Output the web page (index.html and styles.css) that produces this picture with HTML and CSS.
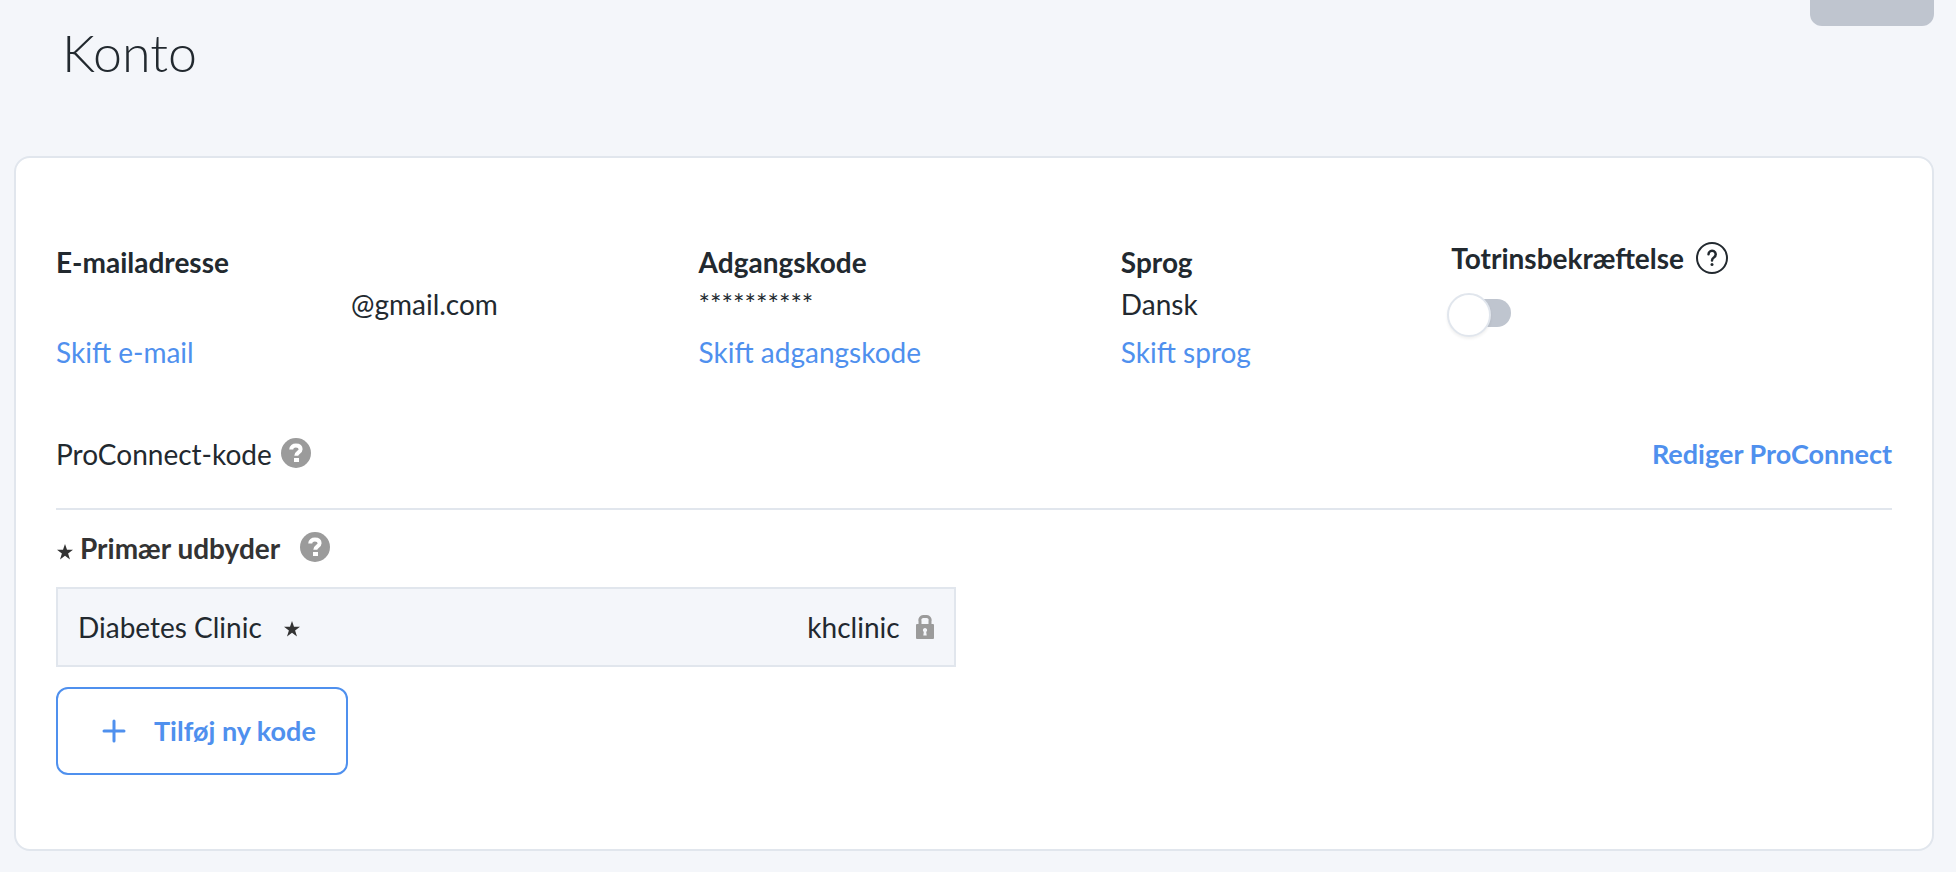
FILE: index.html
```
<!DOCTYPE html>
<html lang="da">

<head>
    <meta charset="UTF-8">
    <meta name="viewport" content="width=device-width, initial-scale=1.0">
    <title>Konto</title>
    <link rel="stylesheet" href="styles.css">
</head>

<body>

    <header class="page-header">
        <h1>Konto</h1>
        <button type="button" class="header-button" aria-label="Gem" disabled></button>
    </header>

    <main class="card">
        <section class="account-grid">
            <div class="field email">
                <h2>E-mailadresse</h2>
                <p class="email-value">@gmail.com</p>
                <a href="#">Skift e-mail</a>
            </div>
            <div class="field">
                <h2>Adgangskode</h2>
                <p class="password-value">**********</p>
                <a href="#">Skift adgangskode</a>
            </div>
            <div class="field">
                <h2>Sprog</h2>
                <p>Dansk</p>
                <a href="#">Skift sprog</a>
            </div>
            <div class="two-step">
                <div class="two-step-title">
                    <label for="two-step">Totrinsbekræftelse</label>
                    <svg class="help-outline" viewBox="0 0 32 32" fill="none" stroke="#22292f" stroke-width="2" stroke-linecap="round">
                        <circle cx="16" cy="16" r="15" />
                        <path d="M12.500 12.300a3.600 3.600 0 1 1 5.600 3c-1.500 1-2.100 1.600-2.100 3.200" stroke-width="2.500" />
                        <circle cx="16" cy="22.500" r="1.500" fill="#22292f" stroke="none" />
                    </svg>
                </div>
                <input type="checkbox" id="two-step" class="switch">
            </div>
        </section>

        <section class="proconnect">
            <div class="with-help">
                <span>ProConnect-kode</span>
                <svg class="help" viewBox="0 0 30 30">
                    <circle cx="15" cy="15" r="15" fill="#9b9b9b" />
                    <path d="M10.200 11.600c0-2.700 2.100-4 4.700-4 2.700 0 4.700 1.300 4.700 3.700 0 3.100-4.300 3.200-4.300 6.400" fill="none" stroke="#fff" stroke-width="4" />
                    <path d="M13 20h5v4h-5z" fill="#fff" />
                </svg>
            </div>
            <a href="#" class="edit-link">Rediger ProConnect</a>
        </section>

        <section class="provider">
            <div class="provider-title">
                <svg class="star" viewBox="0 0 16 16"><path d="M8 0l2 5.800h6l-4.900 3.600L13 15.500 8 11.800 3 15.500l1.900-6.100L0 5.800h6z" /></svg>
                <h2>Primær udbyder</h2>
                <svg class="help" viewBox="0 0 30 30">
                    <circle cx="15" cy="15" r="15" fill="#9b9b9b" />
                    <path d="M10.200 11.600c0-2.700 2.100-4 4.700-4 2.700 0 4.700 1.300 4.700 3.700 0 3.100-4.300 3.200-4.300 6.400" fill="none" stroke="#fff" stroke-width="4" />
                    <path d="M13 20h5v4h-5z" fill="#fff" />
                </svg>
            </div>
            <div class="clinic">
                <span>Diabetes Clinic</span>
                <svg class="star" viewBox="0 0 16 16"><path d="M8 0l2 5.800h6l-4.900 3.600L13 15.500 8 11.800 3 15.500l1.900-6.100L0 5.800h6z" /></svg>
                <span class="clinic-code">khclinic</span>
                <svg class="lock" viewBox="0 0 18 24">
                    <path d="M4 11V6a3.500 3.500 0 0 1 3.500-4.500h3A3.500 3.500 0 0 1 14 6v5" fill="none" stroke="#9b9b9b" stroke-width="3" />
                    <rect y="9" width="18" height="15" rx="1" fill="#9b9b9b" />
                    <path d="M9 13a2.200 2.200 0 0 1 1.200 4l.5 3.500H7.300l.5-3.500A2.200 2.200 0 0 1 9 13z" fill="#f4f6fa" />
                </svg>
            </div>
            <button type="button" class="add-button">
                <svg class="plus" viewBox="0 0 24 24" fill="none" stroke="#4f90ee" stroke-width="3" stroke-linecap="round">
                    <path d="M12 2v20M2 12h20" />
                </svg>
                <span>Tilføj ny kode</span>
            </button>
        </section>
    </main>

</body>

</html>
```

FILE: styles.css
```
*,
*::before {
    box-sizing: border-box;
}

body {
    font-family: Lato, sans-serif;
    font-size: 28px;
    line-height: 42px;
    margin: 0;
    padding: 0 22px 21px 14px;
    background-color: #f4f6fa;
    color: #22292f;
}

h1,
h2,
p {
    margin: 0;
}

h2 {
    font-size: 28px;
    font-weight: 700;
}

a {
    color: #4f90ee;
    text-decoration: none;
}

a:hover {
    text-decoration: underline;
}

svg {
    display: block;
    flex-shrink: 0;
}

.page-header {
    display: flex;
    justify-content: space-between;
    align-items: flex-start;
    padding-left: 48px;
    height: 156px;
}

.page-header h1 {
    font-size: 52px;
    font-weight: 300;
    line-height: 64px;
    padding-top: 20px;
}

.header-button {
    width: 124px;
    height: 26px;
    border: none;
    border-radius: 0 0 12px 12px;
    background-color: #bfc5cf;
}

.card {
    background-color: white;
    padding: 83px 40px 74px;
    border: 2px solid #e1e6ed;
    border-radius: 16px;
}

.account-grid {
    display: grid;
    grid-template-columns: 35% 23% 18% 1fr;
    align-items: start;
}

.field {
    display: flex;
    flex-direction: column;
    align-items: flex-start;
}

.field a {
    margin-top: 6px;
}

.email-value {
    padding-left: 295px;
}

.password-value {
    font-size: 27px;
}

.two-step {
    margin-top: -4px;
}

.two-step-title {
    display: flex;
    align-items: center;
    gap: 12px;
    font-weight: 700;
}

.help-outline {
    width: 32px;
    height: 32px;
}

.switch {
    appearance: none;
    display: block;
    position: relative;
    width: 60px;
    height: 28px;
    margin: 20px 0 0;
    border-radius: 14px;
    background-color: #bfc5cf;
    cursor: pointer;
}

/* Knob is larger than the track */
.switch::before {
    content: "";
    position: absolute;
    top: -6px;
    left: -4px;
    width: 44px;
    height: 44px;
    border: 2px solid #e1e6ed;
    border-radius: 50%;
    background-color: white;
    box-shadow: 0 2px 3px rgba(0, 0, 0, 0.06);
}

.switch:checked {
    background-color: #4f90ee;
}

.switch:checked::before {
    left: 20px;
}

.proconnect {
    display: flex;
    justify-content: space-between;
    align-items: flex-start;
    margin-top: 60px;
    padding-bottom: 33px;
    border-bottom: 2px solid #e1e6ed;
}

.with-help {
    display: flex;
    gap: 9px;
}

.help {
    width: 30px;
    height: 30px;
    margin-top: 5px;
}

.edit-link {
    font-size: 27px;
    font-weight: 700;
}

.provider-title {
    display: flex;
    padding-top: 17px;
    color: #333;
}

.star {
    width: 16px;
    height: 16px;
    fill: #333;
}

.provider-title .star {
    margin: 17px 7px 0 1px;
}

.provider-title .help {
    margin-left: 20px;
}

.clinic {
    display: flex;
    align-items: center;
    width: 49%;
    margin-top: 18px;
    padding: 17px 20px;
    border: 2px solid #e1e6ed;
    background-color: #f4f6fa;
}

.clinic .star {
    margin: 4px 0 0 22px;
}

.clinic-code {
    margin-left: auto;
}

.lock {
    width: 18px;
    height: 24px;
    margin-left: 16px;
}

.add-button {
    display: flex;
    align-items: center;
    gap: 28px;
    margin-top: 20px;
    padding: 21px 30px 21px 44px;
    border: 2px solid #4f90ee;
    border-radius: 12px;
    background-color: white;
    color: #4f90ee;
    font: inherit;
    font-size: 27px;
    font-weight: 700;
    cursor: pointer;
}

.add-button:hover {
    background-color: #f4f6fa;
}

.plus {
    width: 24px;
    height: 24px;
}
```
